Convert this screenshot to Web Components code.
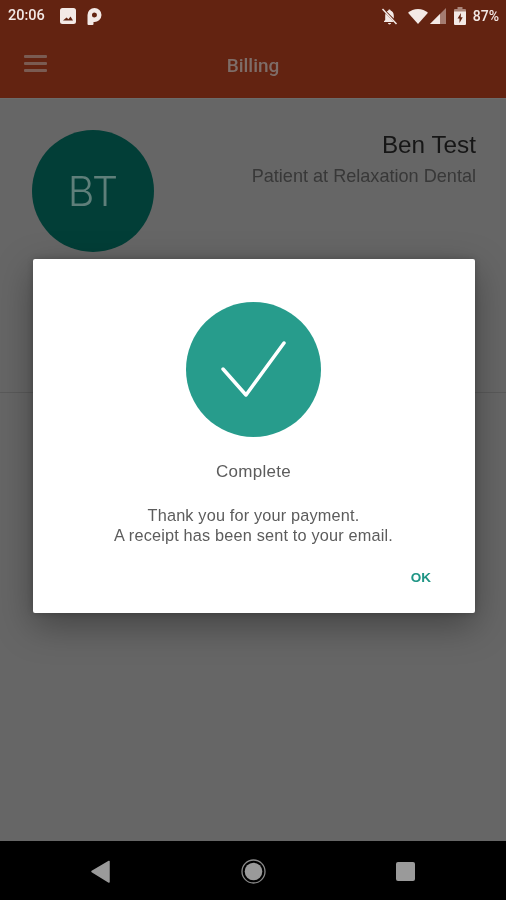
<!DOCTYPE html>
<html lang="en"><head><meta charset="utf-8"><title>Billing</title>
<style>
html,body{margin:0;padding:0;height:100%;background:#666}
body{font-family:"Liberation Sans",Arial,sans-serif;overflow:hidden}
</style></head><body>
<template id="t-status"><style>
:host{display:flex;align-items:center;height:32px;padding:0 7px 0 8px;color:#f3e9e6;font:500 14.5px/1 "Roboto",sans-serif}
.left,.right{display:flex;align-items:center}
.right{margin-left:auto}
svg{display:block;fill:currentColor}
</style>
<div class="left"><span style="width:37px">20:06</span>
<svg style="margin-left:15px" width="16" height="16" viewBox="0 0 16 16"><path fill-rule="evenodd" d="M2.5 0h11A2.500 2.500 0 0 1 16 2.500v11a2.500 2.500 0 0 1-2.500 2.500h-11A2.500 2.500 0 0 1 0 13.500v-11A2.500 2.500 0 0 1 2.500 0zM3 12.500h10L10.500 8.500 8.400 11.300 6.600 9.500z"/></svg>
<svg style="margin-left:11px" width="15" height="17" viewBox="0 0 15 17"><path fill-rule="evenodd" d="M7.500 0A7 7 0 0 1 14.500 7 7 7 0 0 1 6.500 13.900V16a1 1 0 0 1-1 1H1.500a1 1 0 0 1-1-1V7A7 7 0 0 1 7.500 0zM7.500 4.500a2.500 2.500 0 1 0 0 5 2.500 2.500 0 0 0 0-5z"/></svg></div>
<div class="right">
<svg style="margin-right:1px" width="17" height="17" viewBox="0 0 17 17"><path d="M8.500 1.500c-.7 0-1.200.5-1.200 1.100-.6.200-1.100.5-1.500.9l7 7V7.500c0-2.300-1.400-4.200-3.200-4.900 0-.6-.5-1.100-1.100-1.100zM4.600 5.600c-.3.600-.4 1.200-.4 1.900V12L3 13.300v.7h9.600L4.600 5.600zM7 15c0 .8.700 1.400 1.500 1.400S10 15.800 10 15z"/><path d="M1.500 1 15.500 16" stroke="currentColor" stroke-width="1.500" fill="none"/></svg>
<svg style="margin-left:9px" width="20" height="15" viewBox="0 0 20 15"><path d="M0 3.800C2.700 1.400 6.200 0 10 0s7.300 1.400 10 3.800L10 15z"/></svg>
<svg style="margin-left:2px" width="16" height="16" viewBox="0 0 16 16"><path opacity=".45" d="M16 0v16H0z"/><path d="M10 6v10H0z"/></svg>
<svg style="margin-left:8px" width="12" height="18" viewBox="0 0 12 18"><path opacity=".5" d="M3.500 0h5v2H11a1 1 0 0 1 1 1v2H0V3a1 1 0 0 1 1-1h2.500z"/><path fill-rule="evenodd" d="M0 4.500h12V17a1 1 0 0 1-1 1H1a1 1 0 0 1-1-1zM7 6 3.500 11.500H5.500V16L8.700 10.300H6.700z"/></svg>
<span style="margin-left:7px;font-size:14px">87%</span></div></template>

<template id="t-appbar"><style>
:host{height:66px;position:relative;display:flex;align-items:center;justify-content:center;color:#7e6d68;font:500 19px/1 "Roboto",sans-serif;box-sizing:border-box}
button{all:unset;position:absolute;left:24px;top:23px;width:23px;height:17px;display:flex;flex-direction:column;justify-content:space-between}
i{display:block;height:3px;background:#7a5b52;border-radius:1px}
</style><button aria-label="Menu"><i></i><i></i><i></i></button><slot></slot></template>

<template id="t-profile"><style>
:host{display:flex;justify-content:space-between;padding:32px 30px 0 32px;height:160px;box-sizing:border-box}
.av{width:122px;height:122px;border-radius:50%;background:#023e37;color:#5f7f7a;display:flex;align-items:center;justify-content:center;font:300 41px/1 "Inter","Liberation Sans",sans-serif;flex:none}
.info{text-align:right;font-family:"Liberation Sans",sans-serif}
.n{font-size:24.3px;line-height:28px;margin-top:1px;color:#161616}
.r{font-size:18.1px;line-height:24px;margin-top:5px;color:#383838}
</style><div class="av"><slot name="initials"></slot></div>
<div class="info"><div class="n"><slot name="name"></slot></div><div class="r"><slot name="role"></slot></div></div></template>

<template id="t-dialog"><style>
:host{position:absolute;left:33px;top:259px;width:442px;height:354px;background:#fff;border-radius:2px;box-shadow:0 12px 36px rgba(0,0,0,.35),0 0 6px rgba(0,0,0,.2);display:flex;flex-direction:column;align-items:center;box-sizing:border-box;padding-top:43px;color:#5c5c5c;font-family:"Liberation Sans",sans-serif}
.c{width:135px;height:135px;border-radius:50%;background:#279c8c;display:block;flex:none;margin-right:2px}
.t{font-size:17px;line-height:20px;margin-top:25px;letter-spacing:.3px;margin-right:1px}
.m{font-size:16.3px;line-height:19.500px;margin-top:24px;margin-right:1px;text-align:center;letter-spacing:.17px}
.a{align-self:flex-end;margin:25px 44px 0 0;color:#1f9585;font:700 13.500px/16px "Liberation Sans",sans-serif}
</style>
<svg class="c" viewBox="0 0 135 135"><polyline points="37,67 60,93 98,41" fill="none" stroke="#fff" stroke-width="3.500" stroke-linecap="round" stroke-linejoin="round"/></svg>
<div class="t"><slot name="title"></slot></div><div class="m"><slot></slot></div><div class="a"><slot name="action"></slot></div></template>

<template id="t-nav"><style>
:host{display:block;height:59px;background:#000;position:relative}
svg{position:absolute;left:0;top:0}
</style><svg width="506" height="59" viewBox="0 0 506 59"><path d="M109 20.500v20.500L92 30.500z" fill="#9a9a9a" stroke="#9a9a9a" stroke-width="1.500" stroke-linejoin="round"/><circle cx="253.500" cy="30.500" r="11.500" fill="none" stroke="#8a8a8a" stroke-width="1.300"/><circle cx="253.500" cy="30.500" r="8.800" fill="#9a9a9a"/><rect x="396" y="21" width="19" height="19" rx="2" fill="#9a9a9a"/></svg></template>

<template id="t-divider"><style>:host{display:block;height:1px;background:#5a5a5a;margin:0}</style></template>

<template id="t-shell"><style>
:host{display:flex;flex-direction:column;height:900px;width:506px;position:relative;background:#666;overflow:hidden;filter:blur(.45px)}
header{background:#632311;box-shadow:0 1px 0 #6b6b6b;height:98px}
main{flex:1;min-height:0}
</style><header><slot name="status"></slot><slot name="bar"></slot></header><main><slot></slot></main><slot name="nav"></slot><slot name="dialog"></slot></template>

<script>
for (const [tag,id] of [['x-status','t-status'],['x-appbar','t-appbar'],['x-profile','t-profile'],['x-dialog','t-dialog'],['x-nav','t-nav'],['x-divider','t-divider'],['x-shell','t-shell']]) {
  customElements.define(tag,class extends HTMLElement{constructor(){super();this.attachShadow({mode:'open'}).append(document.getElementById(id).content.cloneNode(true));}});
}
</script>
<x-shell>
<x-status slot="status"></x-status>
<x-appbar slot="bar">Billing</x-appbar>
<x-profile><span slot="initials">BT</span><span slot="name">Ben Test</span><span slot="role">Patient at Relaxation Dental</span></x-profile>
<x-divider style="margin-top:134px"></x-divider>
<x-nav slot="nav"></x-nav>
<x-dialog slot="dialog"><span slot="title">Complete</span>Thank you for your payment.<br>A receipt has been sent to your email.<span slot="action">OK</span></x-dialog>
</x-shell>
</body></html>
